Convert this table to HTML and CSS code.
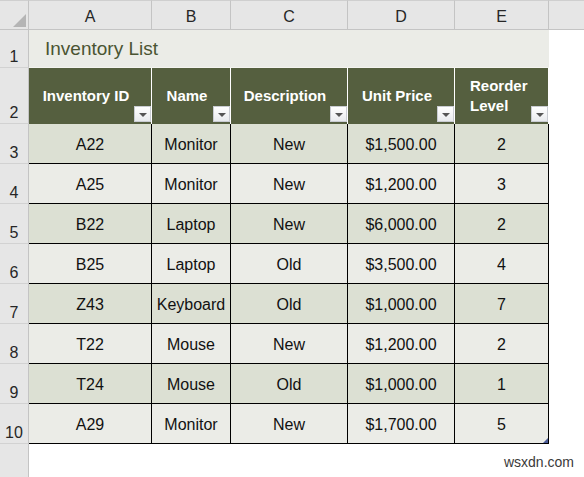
FILE: index.html
```html
<!DOCTYPE html>
<html>
<head>
<meta charset="utf-8">
<link rel="stylesheet" href="styles.css">
</head>
<body>
<div class="sheet">
  <div class="corner"><svg width="14" height="14" viewBox="0 0 14 14"><polygon points="0,13 13,0 13,13" fill="#b5b5b5"/></svg></div>
  <div class="colhead">A</div>
  <div class="colhead">B</div>
  <div class="colhead">C</div>
  <div class="colhead">D</div>
  <div class="colhead">E</div>
  <div class="colhead rest"></div>

  <div class="rownum">1</div>
  <div class="title">Inventory List</div>
  <div class="blank"></div>

  <div class="rownum">2</div>
  <div class="th"><span>Inventory ID</span><span class="filter"><i></i></span></div>
  <div class="th"><span>Name</span><span class="filter"><i></i></span></div>
  <div class="th"><span>Description</span><span class="filter"><i></i></span></div>
  <div class="th"><span>Unit Price</span><span class="filter"><i></i></span></div>
  <div class="th left"><span>Reorder<br>Level</span><span class="filter"><i></i></span></div>
  <div class="blank"></div>

  <div class="rownum">3</div>
  <div class="td odd">A22</div><div class="td odd">Monitor</div><div class="td odd">New</div><div class="td odd">$1,500.00</div><div class="td odd">2</div>
  <div class="blank"></div>

  <div class="rownum">4</div>
  <div class="td">A25</div><div class="td">Monitor</div><div class="td">New</div><div class="td">$1,200.00</div><div class="td">3</div>
  <div class="blank"></div>

  <div class="rownum">5</div>
  <div class="td odd">B22</div><div class="td odd">Laptop</div><div class="td odd">New</div><div class="td odd">$6,000.00</div><div class="td odd">2</div>
  <div class="blank"></div>

  <div class="rownum">6</div>
  <div class="td">B25</div><div class="td">Laptop</div><div class="td">Old</div><div class="td">$3,500.00</div><div class="td">4</div>
  <div class="blank"></div>

  <div class="rownum">7</div>
  <div class="td odd">Z43</div><div class="td odd">Keyboard</div><div class="td odd">Old</div><div class="td odd">$1,000.00</div><div class="td odd">7</div>
  <div class="blank"></div>

  <div class="rownum">8</div>
  <div class="td">T22</div><div class="td">Mouse</div><div class="td">New</div><div class="td">$1,200.00</div><div class="td">2</div>
  <div class="blank"></div>

  <div class="rownum">9</div>
  <div class="td odd">T24</div><div class="td odd">Mouse</div><div class="td odd">Old</div><div class="td odd">$1,000.00</div><div class="td odd">1</div>
  <div class="blank"></div>

  <div class="rownum">10</div>
  <div class="td">A29</div><div class="td">Monitor</div><div class="td">New</div><div class="td">$1,700.00</div><div class="td last">5<span class="handle"></span></div>
  <div class="blank"></div>

  <div class="rownum empty"></div>
  <div class="footer">wsxdn.com</div>
</div>
</body>
</html>
```

FILE: styles.css
```css
html, body {
  margin: 0;
  padding: 0;
  background: #ffffff;
}

.sheet {
  width: 584px;
  height: 477px;
  display: grid;
  grid-template-columns: 29px 123px 79px 117px 107px 94px 1fr;
  grid-template-rows: 30px 38px 56px repeat(8, 40px) 1fr;
  font-family: "Liberation Sans", Arial, sans-serif;
  overflow: hidden;
}

.sheet > div {
  box-sizing: border-box;
}

.corner {
  background: #e6e6e6;
  border-top: 1px solid #cfcfcf;
  border-right: 1px solid #c4c4c4;
  border-bottom: 1px solid #c4c4c4;
  display: flex;
  align-items: flex-end;
  justify-content: flex-end;
  padding: 0 1px 1px 0;
}

.corner svg {
  display: block;
}

.colhead {
  background: #e6e6e6;
  border-top: 1px solid #cfcfcf;
  border-right: 1px solid #c4c4c4;
  border-bottom: 1px solid #c4c4c4;
  display: flex;
  align-items: center;
  justify-content: center;
  padding-top: 3px;
  font-size: 16px;
  color: #262626;
}

.colhead.rest {
  border-right: none;
}

.rownum {
  background: #e6e6e6;
  border-right: 1px solid #c4c4c4;
  border-bottom: 1px solid #d2d2d2;
  display: flex;
  align-items: flex-end;
  justify-content: center;
  padding-bottom: 1px;
  font-size: 16px;
  color: #262626;
}

.rownum.empty {
  border-bottom: none;
}

.title {
  grid-column: 2 / 7;
  background: #ebece7;
  border-bottom: 1px solid #f4f4f0;
  display: flex;
  align-items: center;
  padding-left: 16px;
  padding-top: 1px;
  font-size: 19px;
  color: #4a5432;
}

.blank {
  background: #ffffff;
}

.th {
  position: relative;
  background: #555f3f;
  border-right: 1px solid #ffffff;
  display: flex;
  align-items: center;
  justify-content: center;
  padding-right: 8px;
  font-size: 15px;
  font-weight: bold;
  color: #ffffff;
  line-height: 20px;
}

.th.left {
  justify-content: flex-start;
  padding-left: 15px;
  padding-right: 0;
  padding-bottom: 1px;
}

.filter {
  position: absolute;
  right: 0;
  bottom: 2px;
  width: 17px;
  height: 16px;
  box-sizing: border-box;
  background: linear-gradient(#ffffff, #e9ebee);
  border: 1px solid #c9ccd2;
  display: flex;
  align-items: center;
  justify-content: center;
}

.filter i {
  display: block;
  width: 0;
  height: 0;
  border-left: 4px solid transparent;
  border-right: 4px solid transparent;
  border-top: 4px solid #555555;
  margin-top: 1px;
}

.td {
  position: relative;
  background: #ebece7;
  border-right: 1px solid #000000;
  border-bottom: 1px solid #000000;
  display: flex;
  align-items: center;
  justify-content: center;
  font-size: 16px;
  color: #111111;
  padding-top: 2px;
}

.td.odd {
  background: #dce0d3;
}

.handle {
  position: absolute;
  right: 0;
  bottom: 0;
  width: 0;
  height: 0;
  border-left: 5px solid transparent;
  border-bottom: 5px solid #4a5a96;
}

.footer {
  grid-column: 2 / 8;
  display: flex;
  align-items: center;
  justify-content: flex-end;
  padding-right: 10px;
  padding-top: 2px;
  font-size: 14px;
  color: #3a3a3a;
}
```
